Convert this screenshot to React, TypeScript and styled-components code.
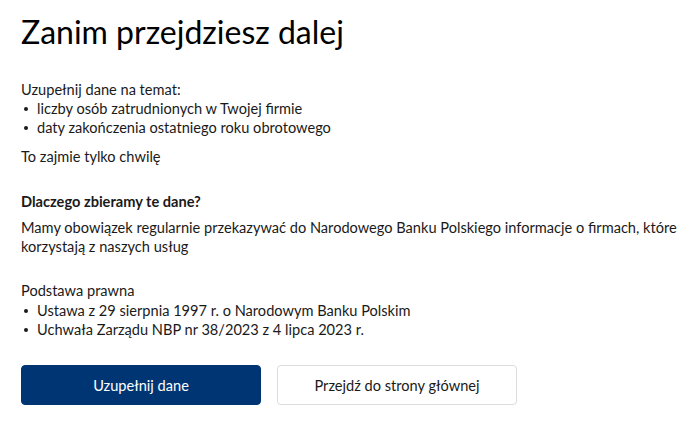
import React from 'react';
import styled, { createGlobalStyle } from 'styled-components';

const GlobalStyle = createGlobalStyle`
  html, body {
    margin: 0;
    padding: 0;
    background: #fff;
  }
  body {
    font-family: Lato, "Noto Sans", sans-serif;
    color: #1a1a1a;
  }
`;

const PageS = styled.main`
  padding: 10px 21px 20px;
  width: 700px;
  box-sizing: border-box;
`;

const TitleS = styled.h1`
  margin: 0 0 26px;
  font-size: 32px;
  font-weight: 400;
  line-height: 44px;
  color: #000;
`;

const TextS = styled.p<{ bold?: boolean; gap?: number }>`
  margin: 0 0 ${({ gap }) => gap ?? 0}px;
  font-size: 14.6px;
  line-height: 19px;
  font-weight: ${({ bold }) => (bold ? 700 : 400)};
`;

const ListS = styled.ul<{ gap?: number }>`
  margin: 0 0 ${({ gap }) => gap ?? 0}px;
  padding: 0;
  list-style: none;
  font-size: 14.6px;
  line-height: 19px;

  li {
    position: relative;
    padding-left: 16px;
  }
  li::before {
    content: '';
    position: absolute;
    left: 3px;
    top: 8px;
    width: 4px;
    height: 4px;
    border-radius: 50%;
    background: #1a1a1a;
  }
`;

const ActionsS = styled.div`
  display: flex;
  gap: 16px;
  margin-top: 26px;
`;

const ButtonS = styled.button<{ primary?: boolean }>`
  width: 240px;
  height: 40px;
  font-family: inherit;
  font-size: 14.6px;
  border-radius: 4px;
  cursor: pointer;
  background: ${({ primary }) => (primary ? '#003574' : '#fff')};
  color: ${({ primary }) => (primary ? '#fff' : '#1a1a1a')};
  border: 1px solid ${({ primary }) => (primary ? '#003574' : '#dcdcdc')};
`;

export default function App() {
  return (
    <>
      <GlobalStyle />
      <PageS>
        <TitleS>Zanim przejdziesz dalej</TitleS>
        <TextS>Uzupełnij dane na temat:</TextS>
        <ListS gap={10}>
          <li>liczby osób zatrudnionych w Twojej firmie</li>
          <li>daty zakończenia ostatniego roku obrotowego</li>
        </ListS>
        <TextS gap={26}>To zajmie tylko chwilę</TextS>
        <TextS bold gap={7}>
          Dlaczego zbieramy te dane?
        </TextS>
        <TextS gap={25}>
          Mamy obowiązek regularnie przekazywać do Narodowego Banku Polskiego informacje o firmach, które
          korzystają z naszych usług
        </TextS>
        <TextS gap={1}>Podstawa prawna</TextS>
        <ListS>
          <li>Ustawa z 29 sierpnia 1997 r. o Narodowym Banku Polskim</li>
          <li>Uchwała Zarządu NBP nr 38/2023 z 4 lipca 2023 r.</li>
        </ListS>
        <ActionsS>
          <ButtonS primary>Uzupełnij dane</ButtonS>
          <ButtonS>Przejdź do strony głównej</ButtonS>
        </ActionsS>
      </PageS>
    </>
  );
}
